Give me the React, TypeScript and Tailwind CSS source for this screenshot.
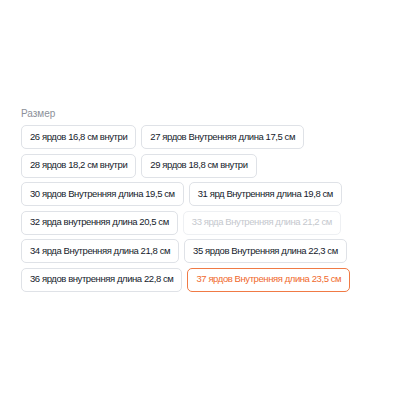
import React from "react";

const sizes: { label: string; state?: "disabled" | "selected" }[] = [
  { label: "26 ярдов 16,8 см внутри" },
  { label: "27 ярдов Внутренняя длина 17,5 см" },
  { label: "28 ярдов 18,2 см внутри" },
  { label: "29 ярдов 18,8 см внутри" },
  { label: "30 ярдов Внутренняя длина 19,5 см" },
  { label: "31 ярд Внутренняя длина 19,8 см" },
  { label: "32 ярда внутренняя длина 20,5 см" },
  { label: "33 ярда Внутренняя длина 21,2 см", state: "disabled" },
  { label: "34 ярда Внутренняя длина 21,8 см" },
  { label: "35 ярдов Внутренняя длина 22,3 см" },
  { label: "36 ярдов внутренняя длина 22,8 см" },
  { label: "37 ярдов Внутренняя длина 23,5 см", state: "selected" },
];

export default function App() {
  return (
    <div className="w-[400px] h-[400px] bg-white pt-[107px] pl-[21px] font-['Liberation_Sans',Arial,sans-serif]">
      <div className="text-[10px] leading-[14px] text-[#8c9099] mb-[4px]">Размер</div>
      <div className="flex flex-wrap w-[365px] gap-x-[5px] gap-y-[4.5px]">
        {sizes.map((s) => {
          const cls =
            s.state === "selected"
              ? "border-[#f07a45] text-[#f06a2e]"
              : s.state === "disabled"
              ? "border-[#eef0f3] text-[#c5c8ce]"
              : "border-[#dfe2e7] text-[#151b2b]";
          return (
            <div
              key={s.label}
              className={`h-[24px] flex items-center px-[8px] rounded-[5px] border text-[9.5px] tracking-[-0.42px] whitespace-nowrap ${cls}`}
            >
              {s.label}
            </div>
          );
        })}
      </div>
    </div>
  );
}
